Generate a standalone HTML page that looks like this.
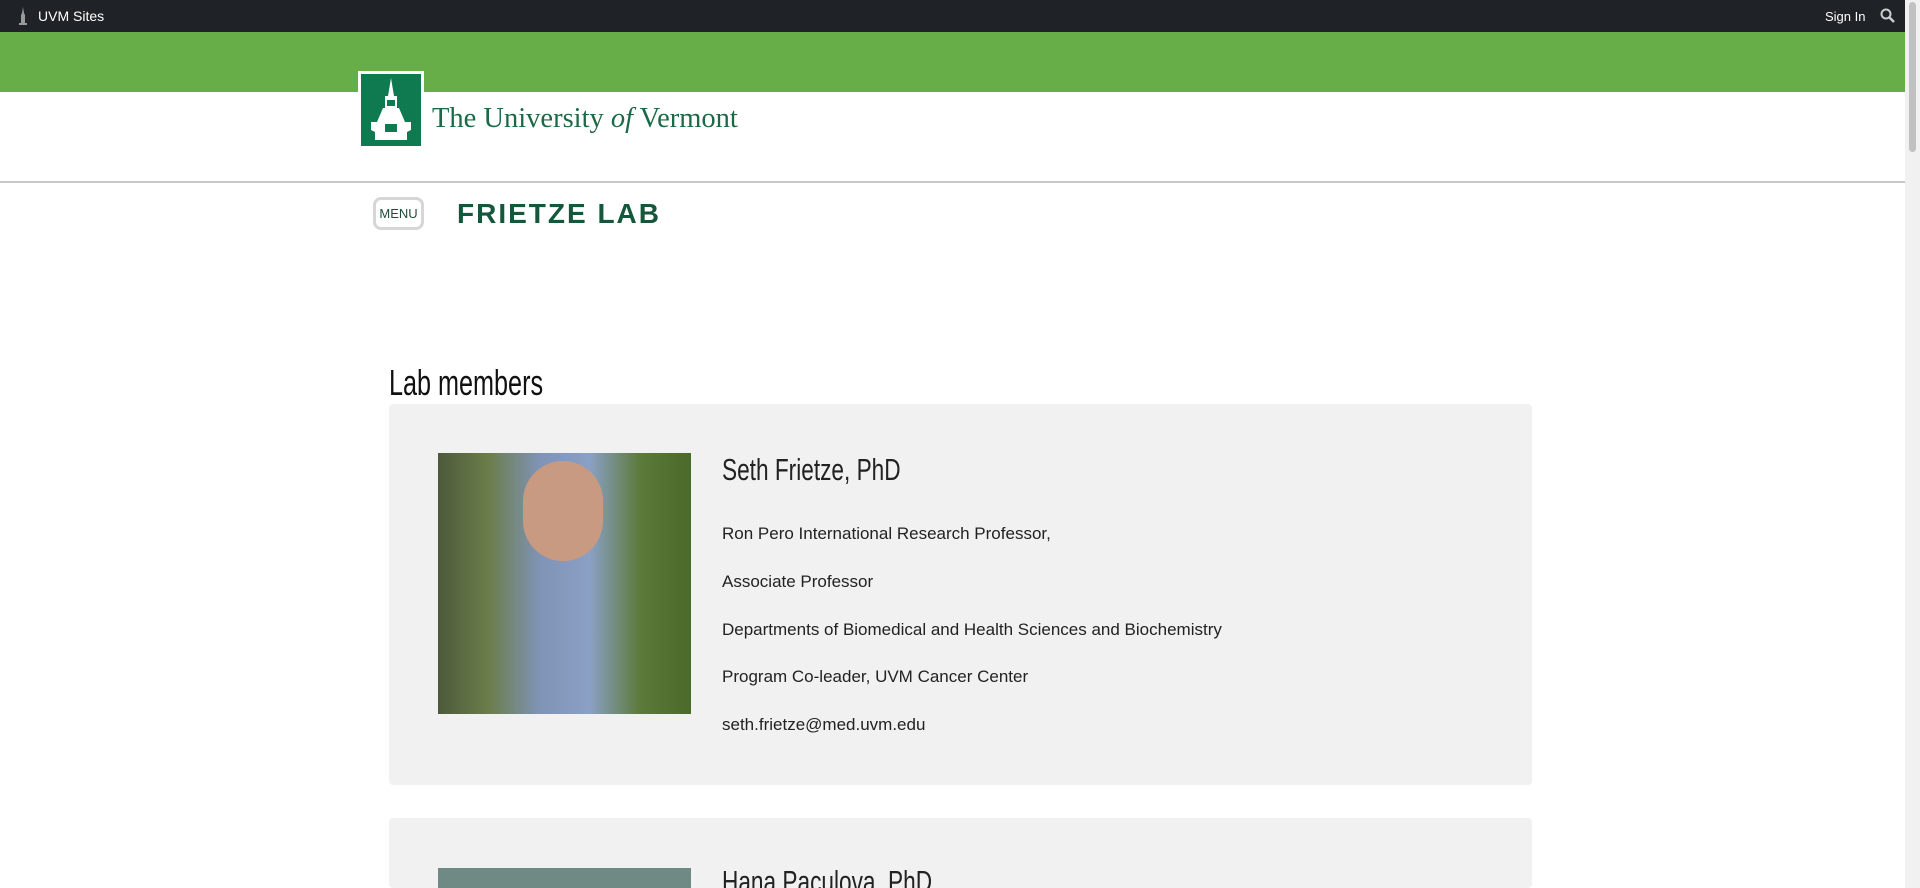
<!DOCTYPE html>
<html style="height:888px;overflow:hidden"><head><meta charset="utf-8"><style>
*{margin:0;padding:0;box-sizing:border-box}
body{width:1920px;height:888px;overflow:hidden;background:#fff;font-family:"Liberation Sans",sans-serif;position:relative}
.top{position:absolute;left:0;top:0;width:1905px;height:32px;background:#1f2327;color:#fff;font-size:14px}
.green{position:absolute;left:0;top:32px;width:1905px;height:60px;background:#67ad48}
.logo{position:absolute;left:358px;top:71px;width:66px;height:78px;background:#fff;padding:3px}
.logo div{width:100%;height:100%;background:#0f7a4f;position:relative}
.word{position:absolute;left:432px;top:103px;font-family:"Liberation Serif",serif;font-size:28.5px;color:#1b6a47}
.hr{position:absolute;left:0;top:181px;width:1905px;height:2px;background:#c8c8c8}
.menu{position:absolute;left:373px;top:197px;width:51px;height:33px;border:3px solid #d6d6d6;border-radius:8px;font-size:13px;color:#1f4f36;text-align:center;line-height:27px}
.title{position:absolute;left:457px;top:198px;font-size:28px;font-weight:bold;letter-spacing:2px;color:#14573a}
.h2{position:absolute;left:389px;top:362px;font-size:36px;color:#111;transform:scaleX(.70);transform-origin:left}
.card{position:absolute;left:389px;width:1143px;background:#f1f1f1;border-radius:4px;overflow:hidden}
.photo{position:absolute;left:49px;width:253px;height:261px}
.name{position:absolute;left:333px;font-size:31px;color:#222;transform:scaleX(.73);transform-origin:left;white-space:nowrap}
.line{position:absolute;left:333px;font-size:17px;color:#222}
.sb{position:absolute;right:0;top:0;width:15px;height:888px;background:#f1f1f1}
.sb div{position:absolute;left:4px;top:2px;width:7px;height:150px;background:#c1c1c1;border-radius:4px}
</style></head><body>
<div class="top">
<svg style="position:absolute;left:18px;top:7px" width="10" height="18" viewBox="0 0 10 18"><path d="M5 0L6 6L7 8V16H9V18H1V16H3V8L4 6Z" fill="#9a9a9a"/></svg>
<span style="position:absolute;left:38px;top:8px">UVM Sites</span>
<span style="position:absolute;left:1825px;top:9px;font-size:13px">Sign In</span>
<svg style="position:absolute;left:1880px;top:8px" width="15" height="15" viewBox="0 0 15 15"><circle cx="6" cy="6" r="4.5" stroke="#ccc" stroke-width="2" fill="none"/><path d="M9.5 9.5L14 14" stroke="#ccc" stroke-width="2.5"/></svg>
</div>
<div class="green"></div>
<div class="logo"><div><svg width="60" height="72" viewBox="0 0 60 72"><path d="M30 4L33 22H36V34H38L44 48H50V56L46 58V66H14V58L10 56V48H16L22 34H24V22H27Z" fill="#fff"/><path d="M26 26h8v6h-8zM24 50h12v8h-12z" fill="#0f7a4f"/></svg></div></div>
<div class="word">The University <i>of</i> Vermont</div>
<div class="hr"></div>
<div class="menu">MENU</div>
<div class="title">FRIETZE LAB</div>
<div class="h2">Lab members</div>
<div class="card" style="top:404px;height:381px">
<div class="photo" style="top:49px;background:linear-gradient(90deg,#4c5a3a 0%,#6b7d4a 20%,#7f93b5 40%,#8aa0c4 60%,#5c7a3a 80%,#4a6a2a 100%)"><div style="position:absolute;left:85px;top:8px;width:80px;height:100px;border-radius:40px;background:#c99a82"></div></div>
<div class="name" style="top:48px">Seth Frietze, PhD</div>
<div class="line" style="top:120px">Ron Pero International Research Professor,</div>
<div class="line" style="top:168px">Associate Professor</div>
<div class="line" style="top:216px">Departments of Biomedical and Health Sciences and Biochemistry</div>
<div class="line" style="top:263px">Program Co-leader, UVM Cancer Center</div>
<div class="line" style="top:311px">seth.frietze@med.uvm.edu</div>
</div>
<div class="card" style="top:818px;height:70px">
<div class="photo" style="top:50px;background:#6f8a84"></div>
<div class="name" style="top:46px">Hana Paculova, PhD</div>
</div>
<div class="sb"><div></div></div>
</body></html>
